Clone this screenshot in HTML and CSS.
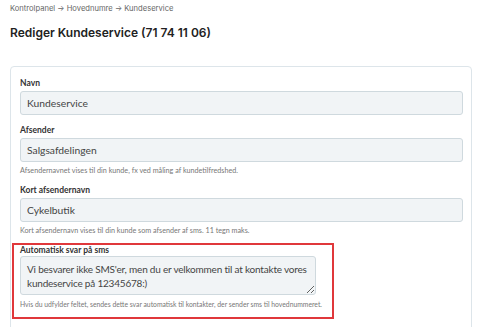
FILE: index.html
```html
<!DOCTYPE html>
<html lang="da">
<head>
  <meta charset="UTF-8">
  <meta name="viewport" content="width=device-width, initial-scale=1.0">
  <title>Rediger Kundeservice</title>
  <link rel="stylesheet" href="styles.css">
</head>
<body>
  <div class="page">
    <div class="breadcrumb">Kontrolpanel → Hovednumre → Kundeservice</div>
    <h1>Rediger Kundeservice (71 74 11 06)</h1>

    <div class="card">
      <div class="field">
        <label for="navn">Navn</label>
        <input type="text" id="navn" value="Kundeservice">
      </div>
      <div class="field">
        <label for="afsender">Afsender</label>
        <input type="text" id="afsender" value="Salgsafdelingen">
        <div class="help">Afsendernavnet vises til din kunde, fx ved måling af kundetilfredshed.</div>
      </div>
      <div class="field">
        <label for="kort">Kort afsendernavn</label>
        <input type="text" id="kort" value="Cykelbutik">
        <div class="help">Kort afsendernavn vises til din kunde som afsender af sms. 11 tegn maks.</div>
      </div>
      <div class="field highlight">
        <label for="svar">Automatisk svar på sms</label>
        <textarea id="svar" rows="2">Vi besvarer ikke SMS'er, men du er velkommen til at kontakte vores kundeservice på 12345678:)</textarea>
        <div class="help">Hvis du udfylder feltet, sendes dette svar automatisk til kontakter, der sender sms til hovednummeret.</div>
      </div>
    </div>
  </div>
</body>
</html>
```

FILE: styles.css
```css
body {
  margin: 0;
  padding: 0;
  background-color: #fff;
  font-family: Lato, "Open Sans", sans-serif;
  color: #333;
  overflow: hidden;
}

.page {
  padding: 4px 5px 0 10px;
  height: 323px;
  overflow: hidden;
}

.breadcrumb {
  font-family: Inter, sans-serif;
  font-size: 7.6px;
  color: #666;
  height: 10px;
  line-height: 10px;
}

h1 {
  font-family: Inter, sans-serif;
  font-size: 12px;
  font-weight: 600;
  color: #222;
  margin: 10px 0 0;
  line-height: 18px;
}

.card {
  margin-top: 24px;
  border: 1px solid #dde5ea;
  border-radius: 4px;
  padding: 9px 8px 20px 9px;
  height: 300px;
}

.field {
  margin-bottom: 8px;
}

label {
  display: block;
  font-size: 8.5px;
  font-weight: 700;
  color: #333;
  line-height: 15px;
}

input[type="text"],
textarea {
  display: block;
  box-sizing: border-box;
  width: 100%;
  font-family: Lato, sans-serif;
  font-size: 10.3px;
  color: #444;
  background-color: #f1f4f6;
  border: 1px solid #cfd9de;
  border-radius: 3px;
  margin: 0;
}

input[type="text"] {
  height: 24px;
  padding: 0 6px;
}

textarea {
  width: 296px;
  height: 39px;
  padding: 5px 4px 4px 6px;
  font-size: 10px;
  letter-spacing: -0.2px;
  line-height: 14px;
  resize: vertical;
  overflow: hidden;
}

.help {
  font-size: 7.2px;
  color: #777;
  margin-top: 4px;
  line-height: 9px;
}

.highlight {
  border: 2px solid #e0383b;
  margin: 6px 0 0 -8px;
  padding: 0 18px 8px 6px;
  width: 294px;
}

.highlight label {
  line-height: 11px;
}

.highlight .help {
  font-size: 6.8px;
  margin-top: 5px;
  white-space: nowrap;
}
```
